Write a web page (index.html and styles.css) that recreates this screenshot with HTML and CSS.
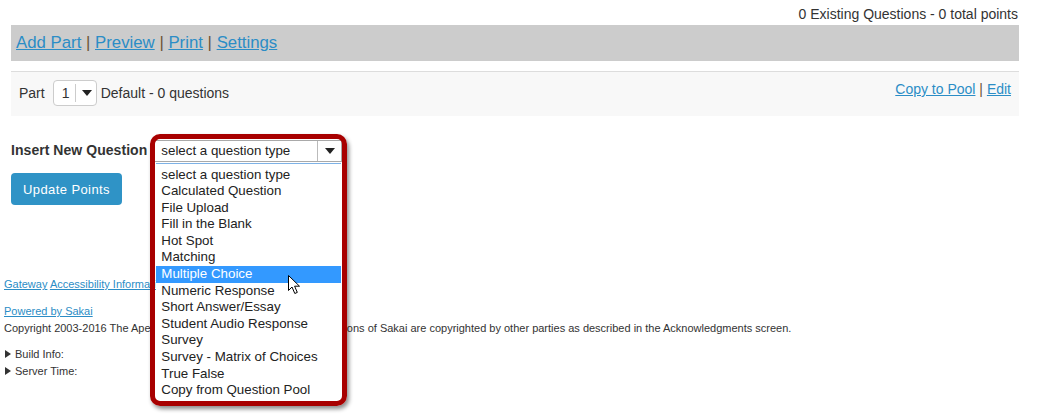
FILE: index.html
```html
<!DOCTYPE html>
<html>
<head>
<meta charset="utf-8">
<link rel="stylesheet" href="styles.css">
</head>
<body>
<div class="summary">0 Existing Questions - 0 total points</div>
<div class="navbar">
  <a href="#">Add Part</a>&nbsp;<span class="sep">|</span>&nbsp;<a href="#">Preview</a>&nbsp;<span class="sep">|</span>&nbsp;<a href="#">Print</a>&nbsp;<span class="sep">|</span>&nbsp;<a href="#">Settings</a>
</div>
<div class="part">
  <div class="part-left">
    <span class="part-label">Part</span>
    <div class="mini-select"><span class="mini-val">1</span><span class="mini-div"></span><span class="caret"></span></div>
    <span class="part-desc">Default - 0 questions</span>
  </div>
  <div class="part-right"><a href="#">Copy to Pool</a> <span class="sep">|</span> <a href="#">Edit</a></div>
</div>
<div class="insert">
  <span class="insert-label">Insert New Question</span>
  <div class="qselect">
    <div class="qselect-box"><span class="qselect-val">select a question type</span><span class="qselect-div"></span><span class="caret"></span></div>
    <ul class="qselect-list">
      <li>select a question type</li>
      <li>Calculated Question</li>
      <li>File Upload</li>
      <li>Fill in the Blank</li>
      <li>Hot Spot</li>
      <li>Matching</li>
      <li class="active">Multiple Choice</li>
      <li>Numeric Response</li>
      <li>Short Answer/Essay</li>
      <li>Student Audio Response</li>
      <li>Survey</li>
      <li>Survey - Matrix of Choices</li>
      <li>True False</li>
      <li>Copy from Question Pool</li>
    </ul>
    <div class="annot"></div>
    <svg class="cursor" width="13" height="20" viewBox="0 0 13 20"><path d="M0.5 0.5 L0.5 15.5 L4 12 L6.8 18.5 L9.3 17.4 L6.6 11.2 L11.5 11.2 Z" fill="#fff" stroke="#000" stroke-width="1" stroke-linejoin="round"/></svg>
  </div>
</div>
<button class="btn">Update Points</button>
<div class="footer">
  <div class="f-links"><a href="#">Gateway</a> <a href="#">Accessibility Information</a></div>
  <div class="f-powered"><a href="#">Powered by Sakai</a></div>
  <div class="f-copy"><span>Copyright 2003-2016 The Aper</span><span class="f-hidden">eo Foundation. All rights reserved. Porti</span><span>ons of Sakai are copyrighted by other parties as described in the Acknowledgments screen.</span></div>
  <div class="f-info first"><span class="tri"></span>Build Info:</div>
  <div class="f-info"><span class="tri"></span>Server Time:</div>
</div>
</body>
</html>
```

FILE: styles.css
```css
html, body { min-height: 417px; }
body {
  margin: 0;
  font-family: "Liberation Sans", Arial, sans-serif;
  color: #333;
  background: #fff;
}
a { color: #2b8dc6; text-decoration: underline; }
.sep { color: #6b5535; }

.summary {
  font-size: 14px;
  line-height: 18px;
  text-align: right;
  padding: 5px 20px 2px 0;
}
.navbar {
  margin: 0 19px 0 11px;
  background: #cccccc;
  height: 36px;
  display: flex;
  align-items: center;
  padding-left: 5px;
  font-size: 16.8px;
}
.part {
  margin: 10px 19px 0 11px;
  border-top: 1px solid #dddddd;
  background: #f8f8f8;
  padding: 8px 8px 10px 8px;
  display: flex;
  justify-content: space-between;
  align-items: flex-start;
  font-size: 14px;
}
.part-left { display: flex; align-items: center; height: 26px; }
.part-label { margin-right: 8px; }
.mini-select {
  width: 44px;
  height: 26px;
  box-sizing: border-box;
  border: 1px solid #cccccc;
  border-radius: 4px;
  background: #fff;
  display: flex;
  align-items: center;
  margin-right: 4px;
}
.mini-val { padding-left: 8px; width: 12px; }
.mini-div { width: 1px; height: 18px; background: #ccc; margin-left: 1px; margin-right: 6px; }
.caret {
  width: 0; height: 0;
  border-left: 5px solid transparent;
  border-right: 5px solid transparent;
  border-top: 6px solid #222;
}
.part-right { line-height: 18px; }

.insert {
  display: flex;
  align-items: center;
  margin: 24px 0 0 11px;
  height: 22px;
}
.insert-label { font-weight: bold; font-size: 14px; letter-spacing: 0.05px; position: relative; top: -1px; }
.qselect { position: relative; margin-left: 7px; width: 188px; height: 22px; }
.qselect-box {
  box-sizing: border-box;
  width: 188px;
  height: 22px;
  border: 1px solid #a9a9a9;
  background: #fff;
  display: flex;
  align-items: center;
  font-size: 13.33px;
  color: #222;
}
.qselect-val { padding-left: 6px; flex: 1; position: relative; top: -1px; }
.qselect-div { width: 1px; height: 20px; background: #bbb; margin-right: 7px; }
.qselect-box .caret { margin-right: 6px; }
.qselect-list {
  position: absolute;
  left: 2px;
  top: 23px;
  width: 185px;
  margin: 0;
  padding: 0;
  list-style: none;
  background: #fff;
  border-top: 1px solid #7eb2e6;
  font-size: 13.33px;
  color: #222;
  padding-top: 2.5px;
  padding-bottom: 3px;
}
.qselect-list li {
  line-height: 16.6px;
  height: 16.6px;
  padding-left: 5px;
  white-space: nowrap;
}
.qselect-list li.active { background: #3399ff; color: #fff; }
.annot {
  position: absolute;
  left: -4px;
  top: -6px;
  width: 197px;
  height: 272px;
  box-sizing: border-box;
  border: 5px solid #a80000;
  border-radius: 10px;
  box-shadow: 2px 3px 4px rgba(0,0,0,0.45);
}
.cursor { position: absolute; left: 134px; top: 135px; }

.btn {
  display: block;
  margin: 11px 0 0 11px;
  width: 111px;
  height: 32px;
  background: #2f93c6;
  color: #fff;
  border: 0;
  border-radius: 4px;
  font-family: "Liberation Sans", Arial, sans-serif;
  font-size: 13px;
  letter-spacing: 0.4px;
  padding: 0;
}

.footer {
  margin-top: 72px;
  padding-left: 4px;
  font-size: 11px;
  line-height: 14px;
  color: #333;
}
.f-powered { margin-top: 13px; }
.f-copy { margin-top: 3px; white-space: nowrap; }
.f-hidden { visibility: hidden; }
.f-info { margin-top: 3px; display: flex; align-items: center; }
.f-info.first { margin-top: 12px; }
.tri {
  width: 0; height: 0;
  border-top: 4px solid transparent;
  border-bottom: 4px solid transparent;
  border-left: 6px solid #333;
  margin-left: 1px;
  margin-right: 4px;
}
```
